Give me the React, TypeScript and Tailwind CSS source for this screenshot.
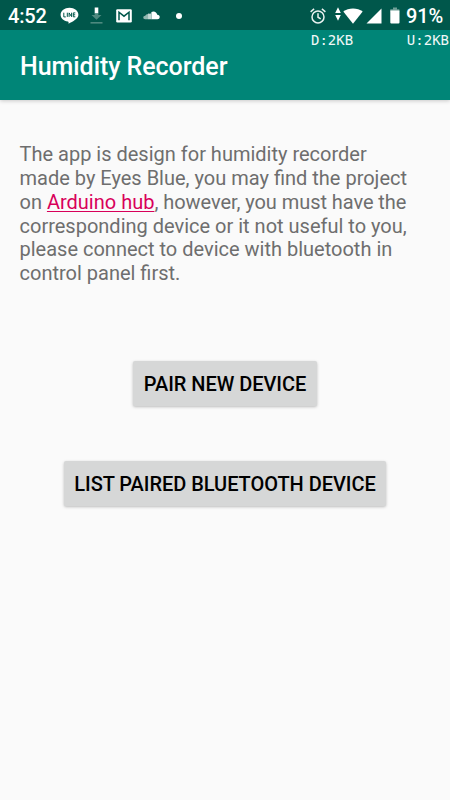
import { FC, ReactNode } from "react";

const LineIcon = () => (
  <svg className="h-[18px] w-[19px]" viewBox="0 0 19 18">
    <path
      d="M9.5 .8C4.6 .8.6 3.8.6 7.8c0 3.5 3 6.1 7.2 6.8.8.2.9.5.7 2.2 4.5-2.3 9.9-5.2 9.9-9C18.4 3.8 14.4.8 9.5.8Z"
      fill="#fff"
    />
    <path
      d="M3.8 5.7v4.2h2M7.3 5.7v4.2M9.1 9.9V5.9l2.5 3.8V5.7M15.3 5.9h-2v3.9h2M13.3 7.8h1.9"
      fill="none"
      stroke="#00574b"
      strokeWidth="1"
    />
  </svg>
);

const DownloadIcon = () => (
  <svg className="h-[18px] w-[13px]" viewBox="0 0 13 18">
    <path d="M4.7 .5h3.6v6H4.7z" fill="#fff" />
    <path d="M4.7 6.5h3.6V8h3.2l-5 4.7L1.5 8h3.2z" fill="#4d897f" />
    <path d="M.5 15h12v1.6H.5z" fill="#4d897f" />
  </svg>
);

const MailIcon = () => (
  <svg className="h-[14px] w-4" viewBox="0 0 16 14">
    <rect x=".2" y=".2" width="15.6" height="13.3" rx="1.2" fill="#fff" />
    <path
      d="M3 11.2V3.2L8 7.2l5-4v8"
      fill="none"
      stroke="#00574b"
      strokeWidth="1.5"
    />
  </svg>
);

const CloudIcon = () => (
  <svg className="h-[9px] w-[17px]" viewBox="0 0 17 9">
    <path
      d="M8.5 8.2V1C9 .6 9.7.4 10.4.4c2 0 3.5 1.4 3.8 3.3 1.4-.2 2.5.9 2.5 2.2 0 1.3-1 2.3-2.2 2.3Z"
      fill="#fff"
    />
    <path d="M5 8.2V2.8c1-.5 1.7-.3 2.2.2L8.6 1v7.2Z" fill="#c3d8d4" />
    <path
      d="M5.1 8.2H2.2C1 8.2.3 7.5.3 6.5s.8-1.7 1.9-1.7C2.6 3.9 3.7 3 5.1 3Z"
      fill="#92b7b0"
    />
  </svg>
);

const AlarmIcon = () => (
  <svg
    className="h-4 w-4"
    viewBox="0 0 16 16"
    fill="none"
    stroke="#e9f2f0"
    strokeWidth="1.5"
  >
    <circle cx="8" cy="8.9" r="6" />
    <path d="M.6 3.8 4.1.9M15.4 3.8 11.9.9M8 5.2v4l2.7 1.6" />
  </svg>
);

const TrafficIcon = () => (
  <svg className="h-[14px] w-[6px]" viewBox="0 0 6 14" fill="#fff">
    <path d="M3 .2 5.8 6.1H.2zM3 13.8.2 7.9h5.6z" />
  </svg>
);

const WifiIcon = () => (
  <svg className="h-4 w-5" viewBox="0 0 20 16" fill="#fff">
    <path d="M10 15.7.3 3.6C3 1.5 6.3.4 10 .4s7 1.1 9.7 3.2z" />
  </svg>
);

const SignalIcon = () => (
  <svg className="h-4 w-4" viewBox="0 0 16 16" fill="#fff">
    <path d="M15.5.5v15H.5z" />
  </svg>
);

const BatteryIcon = () => (
  <svg className="h-[17px] w-[10px]" viewBox="0 0 10 17">
    <path d="M3 .5h4v1.7h2.3v2.4H.3V2.2H3z" fill="#6f9f97" />
    <path d="M.3 3.4h9.2v12q0 1-1 1H1.3q-1 0-1-1z" fill="#fff" />
  </svg>
);

const StatusBar = () => (
  <div className="relative flex h-[30px] items-center bg-[#00574b] text-white">
    <span className="ml-[8px] w-[52px] pt-[2px] text-[20px] leading-[30px] font-medium tracking-[-0.2px]">
      4:52
    </span>
    <div className="mt-px flex items-center">
      <LineIcon />
      <div className="ml-[11px]">
        <DownloadIcon />
      </div>
      <div className="ml-[13px]">
        <MailIcon />
      </div>
      <div className="ml-[11px]">
        <CloudIcon />
      </div>
      <div className="ml-[16px] h-[6px] w-[6px] rounded-full bg-white" />
    </div>
    <div className="mt-px ml-auto flex items-center">
      <AlarmIcon />
      <div className="mb-[3px] ml-[9px]">
        <TrafficIcon />
      </div>
      <div className="ml-[2px]">
        <WifiIcon />
      </div>
      <div className="ml-[3px]">
        <SignalIcon />
      </div>
      <div className="ml-[8px]">
        <BatteryIcon />
      </div>
    </div>
    <span className="mr-[7px] ml-[6px] w-[37px] pt-[2px] text-[20px] leading-[30px] font-medium tracking-[-0.1px] whitespace-nowrap">
      91%
    </span>

    {/* network speed overlay */}
    <div className="absolute top-[32px] right-px left-[311px] flex justify-between font-['DejaVu_Sans_Mono',monospace] text-[14px] leading-[17px] text-[#f0f8f7]">
      <span>D:2KB</span>
      <span>U:2KB</span>
    </div>
  </div>
);

interface ButtonProps {
  children: ReactNode;
}

const Button: FC<ButtonProps> = ({ children }) => (
  <button className="h-[45.5px] rounded-[2px] bg-[#d6d7d7] px-[10.3px] pt-px text-[20px] font-medium tracking-[-0.04px] whitespace-nowrap text-black uppercase shadow-[0_1px_3px_rgba(0,0,0,0.25)]">
    {children}
  </button>
);

const App: FC = () => {
  return (
    <div className="h-[800px] w-[450px] overflow-hidden bg-[#fafafa] font-[Roboto,sans-serif]">
      <StatusBar />
      <header className="flex h-[70px] items-center bg-[#008577] pt-[3px] pl-5 shadow-[0_1px_4px_rgba(0,0,0,0.2)]">
        <h1 className="text-[25px] leading-[30px] font-medium tracking-[-0.05px] text-white">
          Humidity Recorder
        </h1>
      </header>

      <main className="flex flex-col items-center">
        <p className="mt-[43.4px] w-full pl-[19.5px] text-[20px] leading-[23.75px] whitespace-nowrap text-[#6e6e6e]">
          The app is design for humidity recorder
          <br />
          made by Eyes Blue, you may find the project
          <br />
          on{" "}
          <a className="text-[#d8005a] underline decoration-[1.3px] underline-offset-2">
            Arduino hub
          </a>
          <span className="tracking-[-0.06px]">, however, you must have the</span>
          <br />
          corresponding device or it not useful to you,
          <br />
          please connect to device with bluetooth in
          <br />
          control panel first.
        </p>
        <div className="mt-[75px] flex flex-col items-center gap-[54.5px]">
          <Button>Pair new device</Button>
          <Button>List paired bluetooth device</Button>
        </div>
      </main>
    </div>
  );
};

export default App;
